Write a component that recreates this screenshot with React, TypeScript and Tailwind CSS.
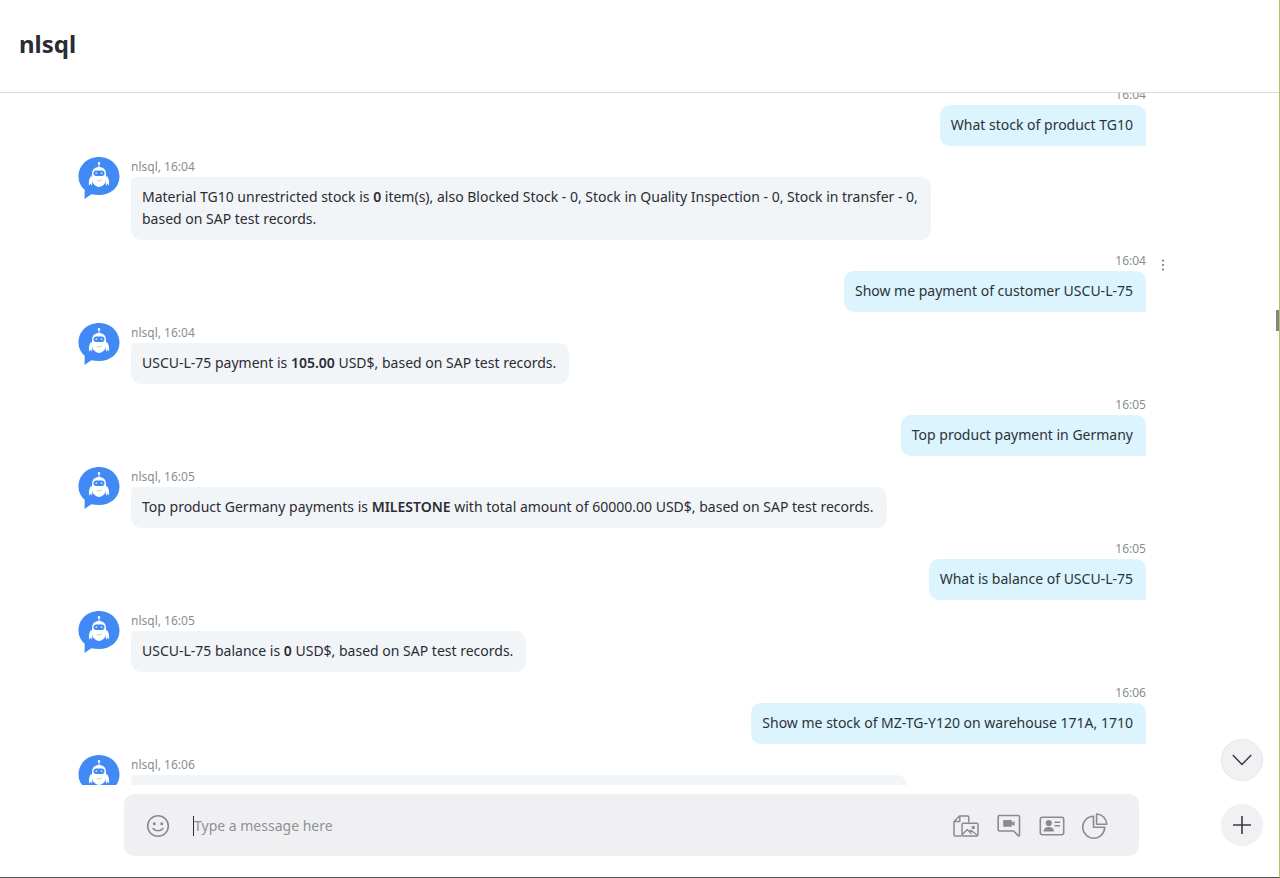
import React from 'react';

interface Message {
  from: 'me' | 'bot';
  time: string;
  body?: React.ReactNode;
  hovered?: boolean;
}

const messages: Message[] = [
  { from: 'me', time: '16:04', body: 'What stock of product TG10' },
  {
    from: 'bot',
    time: '16:04',
    body: (
      <>
        Material TG10 unrestricted stock is <b className="font-semibold">0</b> item(s), also Blocked Stock - 0, Stock in Quality Inspection - 0, Stock in transfer - 0,
        <br />
        based on SAP test records.
      </>
    ),
  },
  { from: 'me', time: '16:04', body: 'Show me payment of customer USCU-L-75', hovered: true },
  {
    from: 'bot',
    time: '16:04',
    body: <>USCU-L-75 payment is <b className="font-semibold">105.00</b> USD$, based on SAP test records.</>,
  },
  { from: 'me', time: '16:05', body: 'Top product payment in Germany' },
  {
    from: 'bot',
    time: '16:05',
    body: <>Top product Germany payments is <b className="font-semibold">MILESTONE</b> with total amount of 60000.00 USD$, based on SAP test records.</>,
  },
  { from: 'me', time: '16:05', body: 'What is balance of USCU-L-75' },
  {
    from: 'bot',
    time: '16:05',
    body: <>USCU-L-75 balance is <b className="font-semibold">0</b> USD$, based on SAP test records.</>,
  },
  { from: 'me', time: '16:06', body: 'Show me stock of MZ-TG-Y120 on warehouse 171A, 1710' },
  { from: 'bot', time: '16:06' },
];

const BotAvatar = () => (
  <svg width="42" height="42" viewBox="0 0 42 42" className="shrink-0" aria-hidden="true">
    <path d="M21 0C32.500 0 41.500 8.300 41.500 19.500S32.500 38 21 38c-2.800 0-5.400-.4-7.700-.7L6.500 42l.2-9.300C2.800 29.400.5 24.800.5 19.500.5 8.300 9.500 0 21 0z" fill="#4189f5" />
    <g fill="#fff">
      <circle cx="21" cy="6.300" r="1.200" />
      <path d="M20.500 7h1v4h-1z" />
      <path d="M21 10c4.700 0 7 3 7 7.200v5.300c0 3.700-3.600 7.500-7 7.500s-7-3.800-7-7.500v-5.300C14 13 16.300 10 21 10z" />
      <path d="M13.300 18.500c-1.900 2.500-2.900 5.500-2.300 10l1.900-2 .9 2.500c.8-2.300.8-7-.5-10.500zM28.700 18.500c1.900 2.500 2.900 5.500 2.300 10l-1.900-2-.9 2.500c-.8-2.300-.8-7 .5-10.500z" />
    </g>
    <rect x="15.500" y="13.500" width="11" height="5.500" rx="2.700" fill="#4189f5" />
    <circle cx="18.300" cy="16.200" r=".9" fill="#c6dbfc" />
    <circle cx="23.700" cy="16.200" r=".9" fill="#c6dbfc" />
    <path d="M19 23.500c1.500.7 3.500.3 5-1" fill="none" stroke="#9fc3fa" strokeWidth=".8" />
  </svg>
);

const MessageRow: React.FC<{ message: Message }> = ({ message }) => {
  if (message.from === 'me') {
    return (
      <li className="flex flex-col items-end">
        <div className="relative h-5 text-xs leading-5 text-[#8a8d91]">
          {message.time}
          {message.hovered && (
            <button aria-label="More options" className="absolute left-full top-1 ml-[11px] flex h-5 w-3 items-center justify-center">
              <svg width="4" height="12" viewBox="0 0 4 12" fill="#75777c">
                <circle cx="2" cy="1.500" r="1.100" />
                <circle cx="2" cy="6" r="1.100" />
                <circle cx="2" cy="10.500" r="1.100" />
              </svg>
            </button>
          )}
        </div>
        <p className="rounded-[10px] rounded-br-none bg-[#dbf4fd] pb-[10px] pl-[11px] pr-[13px] pt-[9px] text-sm leading-[22px] text-[#2b3338]">
          {message.body}
        </p>
      </li>
    );
  }

  return (
    <li className="flex items-start gap-[11px]">
      <BotAvatar />
      <div className="min-w-0">
        <div className="h-5 text-xs leading-5 text-[#8a8d91]">nlsql, {message.time}</div>
        {message.body ? (
          <p className="w-fit rounded-[10px] rounded-tl-sm bg-[#f2f5f8] pb-[10px] pl-[11px] pr-[13px] pt-[9px] text-sm leading-[22px] text-[#2b2c33]">
            {message.body}
          </p>
        ) : (
          <div className="h-16 w-[776px] max-w-full rounded-[10px] rounded-tl-sm bg-[#f2f5f8]" />
        )}
      </div>
    </li>
  );
};

const FilesIcon = () => (
  <svg width="26" height="24" viewBox="0 0 26 24" fill="none" stroke="#8a8b90" strokeWidth="1.500" strokeLinejoin="round">
    <path d="M8.500 22H2.300c-.8 0-1.300-.5-1.300-1.300V7.500L6.500 2h8c.8 0 1.300.5 1.300 1.300V8.500" />
    <path d="M1.200 7.600h5.600V2" />
    <rect x="9" y="9.300" width="16" height="12.700" rx="1.300" />
    <path d="M9.300 20.500l5-5 4.200 4.200M16.300 17.600l1.600-1.300 6.500 5" strokeWidth="1.300" />
    <circle cx="20.300" cy="13.500" r="1.700" fill="#8a8b90" stroke="none" />
  </svg>
);

const VideoMessageIcon = () => (
  <svg width="24" height="24" viewBox="0 0 24 24" fill="none" stroke="#8a8b90" strokeWidth="1.600" strokeLinejoin="round">
    <path d="M2.500 1.500h18.700c.8 0 1.300.5 1.300 1.300V21c0 .9-.8 1.200-1.400.6L16.700 17H2.500c-.8 0-1.300-.5-1.300-1.300V2.800c0-.8.5-1.300 1.300-1.300z" />
    <path d="M7.300 6h6.500c.7 0 1.100.4 1.100 1.100v1.300l2.700-1.500v5l-2.700-1.500v1.300c0 .7-.4 1.100-1.100 1.100H7.300c-.7 0-1.100-.4-1.100-1.100V7.100c0-.7.4-1.100 1.100-1.100z" fill="#8a8b90" stroke="none" />
  </svg>
);

const ContactIcon = () => (
  <svg width="26" height="20" viewBox="0 0 26 20" fill="none" stroke="#8a8b90" strokeWidth="1.600">
    <rect x="1.300" y="1.300" width="23.400" height="17.400" rx="2.200" />
    <path d="M15.500 6.300h5.500M15.500 9.800h5.500" strokeWidth="1.400" />
    <circle cx="9.800" cy="7" r="3.100" fill="#8a8b90" stroke="none" />
    <path d="M4.500 15.500c.3-3.100 2.400-4.400 5.300-4.400s5 1.300 5.300 4.400z" fill="#8a8b90" stroke="none" />
  </svg>
);

const PollIcon = () => (
  <svg width="26" height="26" viewBox="0 0 26 26" fill="none" stroke="#8a8b90" strokeWidth="1.600" strokeLinejoin="round">
    <path d="M11.500 3.200v11h11.200A11 11 0 1 1 11.500 3.200z" />
    <path d="M14.600 1c5.600.2 9.800 4.300 10.200 10.300H14.600z" />
  </svg>
);

const tools = [
  { label: 'Add files', icon: <FilesIcon /> },
  { label: 'Video message', icon: <VideoMessageIcon /> },
  { label: 'Send contact', icon: <ContactIcon /> },
  { label: 'Create a poll', icon: <PollIcon /> },
];

export default function App() {
  return (
    <div className="relative flex h-screen flex-col overflow-hidden border-b border-r border-b-[#55554f] border-r-[#a9c95c] bg-white font-['Noto_Sans','Open_Sans',sans-serif]">
      <header className="flex h-[93px] shrink-0 items-center border-b border-[#dcdcde] px-[19px] pb-1">
        <h1 className="text-2xl font-bold text-[#2b2c33]">nlsql</h1>
      </header>

      <main className="relative min-h-0 flex-1">
        <div className="h-full overflow-hidden">
          <ul className="-mt-2 flex flex-col gap-[11px] pl-[78px] pr-[133px]">
            {messages.map((message, idx) => (
              <MessageRow key={idx} message={message} />
            ))}
          </ul>
        </div>
        <div className="absolute right-0 top-[217px] h-[21px] w-[3px] bg-[#858585]" />
        <button aria-label="Scroll to latest" className="absolute bottom-1 right-4 flex size-[42px] items-center justify-center rounded-full border border-[#e6e6e9] bg-[#f1f1f4]">
          <svg width="20" height="12" viewBox="0 0 20 12" fill="none" stroke="#3a3b40" strokeWidth="1.500">
            <path d="M.8 1L10 10.500 19.200 1" />
          </svg>
        </button>
      </main>

      <footer className="flex h-[92px] shrink-0 items-start pl-[124px] pr-4 pt-[9px]">
        <div className="flex h-[62px] min-w-0 flex-1 items-center rounded-[10px] bg-[#f0f0f3] pl-[22px] pr-[31px] pt-px">
          <button aria-label="Emoji" className="shrink-0">
            <svg width="24" height="24" viewBox="0 0 24 24" fill="none" stroke="#8a8b90" strokeWidth="1.600">
              <circle cx="12" cy="12" r="10.300" />
              <circle cx="8.300" cy="9.800" r="1.500" fill="#8a8b90" stroke="none" />
              <circle cx="15.700" cy="9.800" r="1.500" fill="#8a8b90" stroke="none" />
              <path d="M7 14.500c2.500 3 7.500 3 10 0" strokeLinecap="round" />
            </svg>
          </button>
          <div className="ml-[23px] flex min-w-0 flex-1 items-center border-l border-[#2b2c33]">
            <input
              type="text"
              aria-label="Message"
              placeholder="Type a message here"
              className="h-5 w-full bg-transparent text-sm leading-5 text-[#2b2c33] outline-none placeholder:text-[#8e9095]"
            />
          </div>
          <div className="flex shrink-0 items-center gap-[17px]">
            {tools.map((tool) => (
              <button key={tool.label} aria-label={tool.label} className="flex w-[26px] justify-center">
                {tool.icon}
              </button>
            ))}
          </div>
        </div>
        <button aria-label="New" className="ml-[82px] mt-[10px] flex size-[42px] shrink-0 items-center justify-center rounded-full bg-[#f1f1f4]">
          <svg width="20" height="20" viewBox="0 0 20 20" fill="none" stroke="#3a3b40" strokeWidth="1.600">
            <path d="M10 1v18M1 10h18" />
          </svg>
        </button>
      </footer>
    </div>
  );
}
